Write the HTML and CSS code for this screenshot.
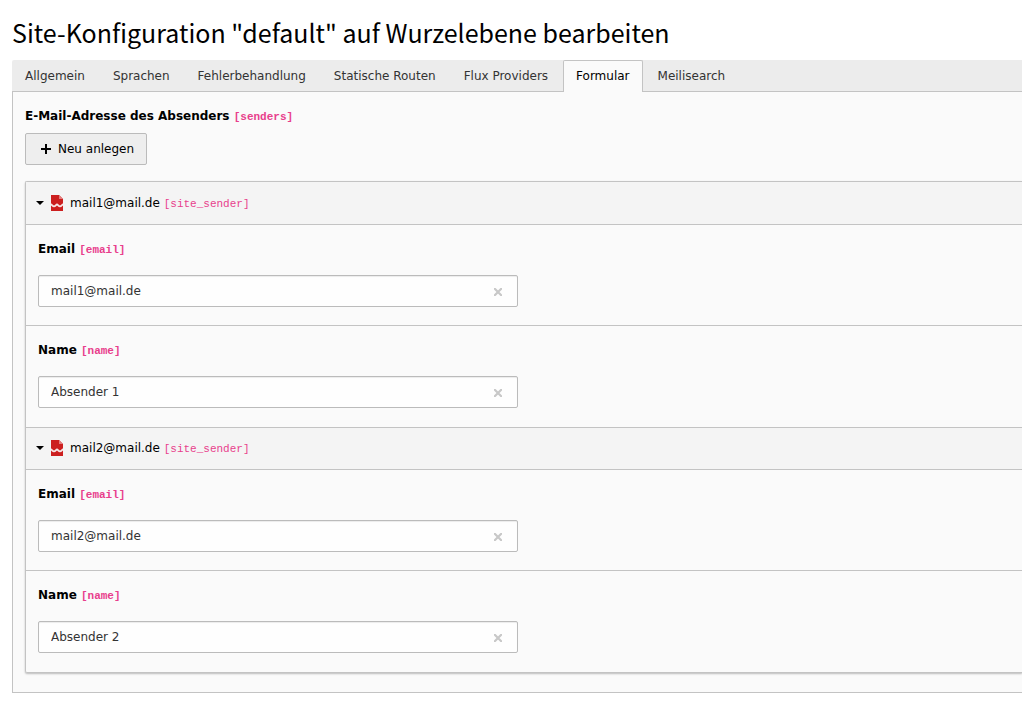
FILE: index.html
```html
<!DOCTYPE html>
<html lang="de">
<head>
<meta charset="utf-8">
<title>Site-Konfiguration</title>
<link rel="stylesheet" href="styles.css">
</head>
<body>
<svg class="sprite" aria-hidden="true">
  <symbol id="icon-record" viewBox="0 0 12 16">
    <path fill="#cc1f1f" d="M0 0h8l4 4v12H0z"/>
    <path fill="#e37f7f" d="M8 0l4 4H8z"/>
    <path fill="none" stroke="#f7e6e6" stroke-width="1.800" d="M0 9.500c1 0 1.500 1.800 3 1.800S5 9.500 6 9.500s1.500 1.800 3 1.800S11 9.500 12 9.500"/>
  </symbol>
  <symbol id="icon-caret" viewBox="0 0 8 4"><path d="M0 0h8L4 4z"/></symbol>
  <symbol id="icon-clear" viewBox="0 0 8 8"><path d="M0 0l8 8M8 0L0 8" stroke="#c8c8c8" stroke-width="2.200"/></symbol>
</svg>
<main class="module">
  <h1 class="title">Site-Konfiguration "default" auf Wurzelebene bearbeiten</h1>
  <nav class="tabs">
    <a class="tab" href="#">Allgemein</a>
    <a class="tab" href="#">Sprachen</a>
    <a class="tab" href="#">Fehlerbehandlung</a>
    <a class="tab" href="#">Statische Routen</a>
    <a class="tab" href="#">Flux Providers</a>
    <a class="tab tab-active" href="#" aria-current="page">Formular</a>
    <a class="tab" href="#">Meilisearch</a>
  </nav>
  <section class="panel">
    <h2 class="label">E-Mail-Adresse des Absenders <code>[senders]</code></h2>
    <button class="button" type="button">
      <svg class="plus" viewBox="0 0 10 10" aria-hidden="true"><path d="M5 0v10M0 5h10" stroke="#000" stroke-width="2"/></svg>
      Neu anlegen
    </button>
    <div class="group">
      <article class="item">
        <button class="item-header" type="button" aria-expanded="true">
          <svg class="caret" aria-hidden="true"><use href="#icon-caret"/></svg>
          <svg class="record" aria-hidden="true"><use href="#icon-record"/></svg>
          <span>mail1@mail.de <code>[site_sender]</code></span>
        </button>
        <div class="field">
          <label class="label" for="email1">Email <code>[email]</code></label>
          <div class="control">
            <input class="input" id="email1" type="text" value="mail1@mail.de">
            <button class="clear" type="button" aria-label="Leeren"><svg class="cross"><use href="#icon-clear"/></svg></button>
          </div>
        </div>
        <div class="field">
          <label class="label" for="name1">Name <code>[name]</code></label>
          <div class="control">
            <input class="input" id="name1" type="text" value="Absender 1">
            <button class="clear" type="button" aria-label="Leeren"><svg class="cross"><use href="#icon-clear"/></svg></button>
          </div>
        </div>
      </article>
      <article class="item">
        <button class="item-header" type="button" aria-expanded="true">
          <svg class="caret" aria-hidden="true"><use href="#icon-caret"/></svg>
          <svg class="record" aria-hidden="true"><use href="#icon-record"/></svg>
          <span>mail2@mail.de <code>[site_sender]</code></span>
        </button>
        <div class="field">
          <label class="label" for="email2">Email <code>[email]</code></label>
          <div class="control">
            <input class="input" id="email2" type="text" value="mail2@mail.de">
            <button class="clear" type="button" aria-label="Leeren"><svg class="cross"><use href="#icon-clear"/></svg></button>
          </div>
        </div>
        <div class="field">
          <label class="label" for="name2">Name <code>[name]</code></label>
          <div class="control">
            <input class="input" id="name2" type="text" value="Absender 2">
            <button class="clear" type="button" aria-label="Leeren"><svg class="cross"><use href="#icon-clear"/></svg></button>
          </div>
        </div>
      </article>
    </div>
  </section>
</main>
</body>
</html>
```
FILE: styles.css
```css
* {
  box-sizing: border-box;
}

body {
  margin: 0;
  background: #fff;
  color: #000;
  font: 12px/18px "DejaVu Sans", Verdana, sans-serif;
}

button,
input {
  font: inherit;
  color: inherit;
}

code {
  color: #e83e8c;
  font: 11px/12px "Liberation Mono", monospace;
  font-weight: inherit;
}

.sprite {
  display: none;
}

.module {
  padding: 14px 0 12px 12px;
}

.title {
  margin: 0 0 10px;
  font: 400 25px/36px "Noto Sans CJK SC", sans-serif;
}

.tabs {
  display: flex;
  gap: 2px;
  background: #ececec;
  border-radius: 2px 0 0 0;
  box-shadow: inset 0 -1px #c3c3c3;
}

.tab {
  padding: 6px 12px 7px;
  border: 1px solid transparent;
  border-bottom: 0;
  color: #333;
  text-decoration: none;
}

.tab-active {
  background: #fafafa;
  border-color: #c3c3c3;
  border-radius: 2px 2px 0 0;
  color: #000;
}

.panel {
  padding: 15px 0 19px 12px;
  background: #fafafa;
  border: solid #c3c3c3;
  border-width: 0 0 1px 1px;
}

.label {
  display: block;
  margin: 0;
  font-size: 12px;
  line-height: 18px;
  font-weight: 700;
}

.button {
  display: flex;
  align-items: center;
  gap: 7px;
  height: 32px;
  margin: 8px 0 16px;
  padding: 0 12px 0 15px;
  background: #eee;
  border: 1px solid #bbb;
  border-radius: 2px;
}

.plus {
  width: 10px;
  height: 10px;
}

.group {
  border: 1px solid #c3c3c3;
  border-right: 0;
  border-radius: 2px 0 0 2px;
  box-shadow: 0 1px 2px rgba(0, 0, 0, 0.25);
}

.item-header {
  display: flex;
  align-items: center;
  width: 100%;
  height: 42px;
  padding: 0 10px;
  background: #f4f4f4;
  border: 0;
  text-align: left;
}

.item + .item .item-header {
  padding-bottom: 1px;
  border-top: 1px solid #c3c3c3;
}

.caret {
  width: 8px;
  height: 4px;
  margin-right: 7px;
}

.record {
  width: 12px;
  height: 16px;
  margin-right: 7px;
}

.field {
  padding: 15px 12px 18px;
  border-top: 1px solid #c3c3c3;
}

.field:last-child {
  padding-bottom: 19px;
}

.control {
  position: relative;
  max-width: 480px;
  margin-top: 17px;
}

.input {
  display: block;
  width: 100%;
  height: 32px;
  padding: 0 32px 0 12px;
  background: #fefefe;
  border: 1px solid #bbb;
  border-radius: 2px;
  box-shadow: inset 0 1px 1px rgba(0, 0, 0, 0.075);
  color: #333;
}

.clear {
  position: absolute;
  top: 9px;
  right: 12px;
  display: flex;
  align-items: center;
  justify-content: center;
  width: 16px;
  height: 16px;
  padding: 0;
  background: none;
  border: 0;
}

.cross {
  width: 8px;
  height: 8px;
}
```
